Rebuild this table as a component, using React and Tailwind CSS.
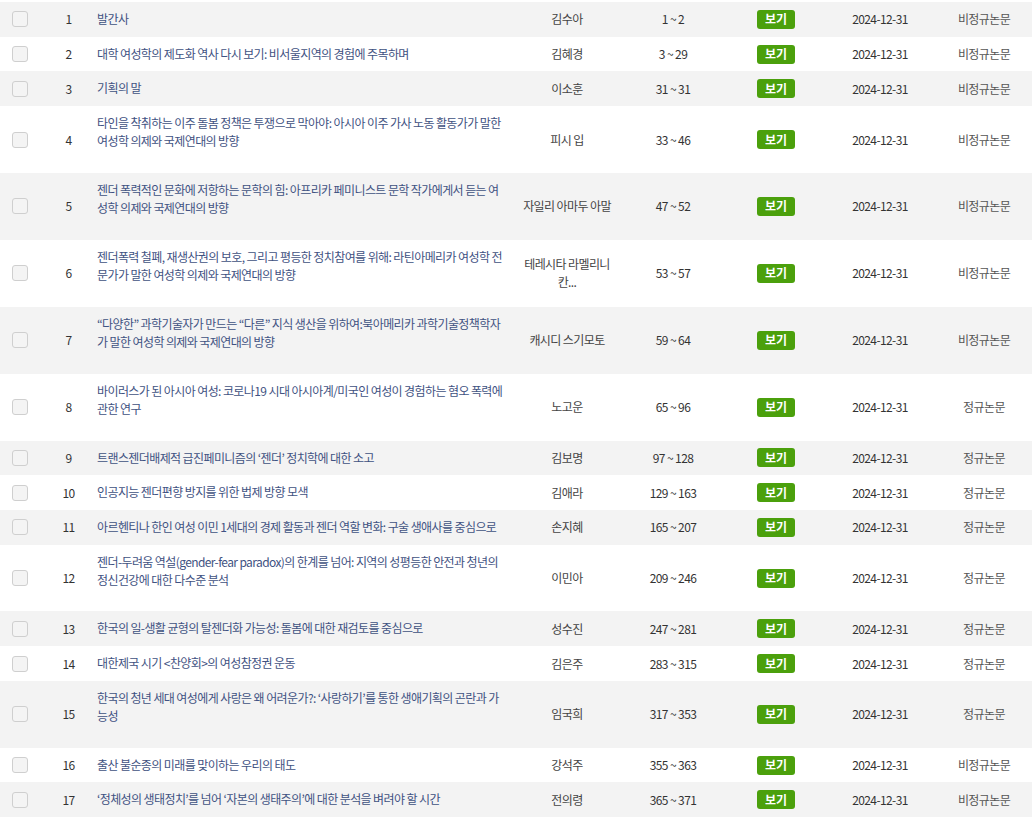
const rows = [
  { no: 1, title: ['발간사'], author: ['김수아'], pages: '1 ~ 2', type: '비정규논문' },
  { no: 2, title: ['대학 여성학의 제도화 역사 다시 보기: 비서울지역의 경험에 주목하며'], author: ['김혜경'], pages: '3 ~ 29', type: '비정규논문' },
  { no: 3, title: ['기획의 말'], author: ['이소훈'], pages: '31 ~ 31', type: '비정규논문' },
  { no: 4, title: ['타인을 착취하는 이주 돌봄 정책은 투쟁으로 막아야: 아시아 이주 가사 노동 활동가가 말한', '여성학 의제와 국제연대의 방향'], author: ['피시 입'], pages: '33 ~ 46', type: '비정규논문' },
  { no: 5, title: ['젠더 폭력적인 문화에 저항하는 문학의 힘: 아프리카 페미니스트 문학 작가에게서 듣는 여', '성학 의제와 국제연대의 방향'], author: ['자일리 아마두 아말'], pages: '47 ~ 52', type: '비정규논문' },
  { no: 6, title: ['젠더폭력 철폐, 재생산권의 보호, 그리고 평등한 정치참여를 위해: 라틴아메리카 여성학 전', '문가가 말한 여성학 의제와 국제연대의 방향'], author: ['테레시타 라멜리니', '칸...'], pages: '53 ~ 57', type: '비정규논문' },
  { no: 7, title: ['“다양한” 과학기술자가 만드는 “다른” 지식 생산을 위하여:북아메리카 과학기술정책학자', '가 말한 여성학 의제와 국제연대의 방향'], author: ['캐시디 스기모토'], pages: '59 ~ 64', type: '비정규논문' },
  { no: 8, title: ['바이러스가 된 아시아 여성: 코로나19 시대 아시아계/미국인 여성이 경험하는 혐오 폭력에', '관한 연구'], author: ['노고운'], pages: '65 ~ 96', type: '정규논문' },
  { no: 9, title: ['트랜스젠더배제적 급진페미니즘의 ‘젠더’ 정치학에 대한 소고'], author: ['김보명'], pages: '97 ~ 128', type: '정규논문' },
  { no: 10, title: ['인공지능 젠더편향 방지를 위한 법제 방향 모색'], author: ['김애라'], pages: '129 ~ 163', type: '정규논문' },
  { no: 11, title: ['아르헨티나 한인 여성 이민 1세대의 경제 활동과 젠더 역할 변화: 구술 생애사를 중심으로'], author: ['손지혜'], pages: '165 ~ 207', type: '정규논문' },
  { no: 12, title: ['젠더-두려움 역설(gender-fear paradox)의 한계를 넘어: 지역의 성평등한 안전과 청년의', '정신건강에 대한 다수준 분석'], author: ['이민아'], pages: '209 ~ 246', type: '정규논문' },
  { no: 13, title: ['한국의 일-생활 균형의 탈젠더화 가능성: 돌봄에 대한 재검토를 중심으로'], author: ['성수진'], pages: '247 ~ 281', type: '정규논문' },
  { no: 14, title: ['대한제국 시기 <찬양회>의 여성참정권 운동'], author: ['김은주'], pages: '283 ~ 315', type: '정규논문' },
  { no: 15, title: ['한국의 청년 세대 여성에게 사랑은 왜 어려운가?: ‘사랑하기’를 통한 생애기획의 곤란과 가', '능성'], author: ['임국희'], pages: '317 ~ 353', type: '정규논문' },
  { no: 16, title: ['출산 불순종의 미래를 맞이하는 우리의 태도'], author: ['강석주'], pages: '355 ~ 363', type: '비정규논문' },
  { no: 17, title: ['‘정체성의 생태정치’를 넘어 ‘자본의 생태주의’에 대한 분석을 벼려야 할 시간'], author: ['전의령'], pages: '365 ~ 371', type: '비정규논문' },
]

function Row({ row }) {
  const tall = row.title.length > 1
  return (
    <div className={`flex ${tall ? 'h-[66.9px]' : 'h-[34.7px]'} ${row.no % 2 ? 'bg-[#f3f3f3]' : 'bg-white'}`}>
      <div className="flex w-[40px] shrink-0 items-center pl-3">
        <span className="block h-4 w-4 rounded-[3px] border border-[#cfcfcf] bg-[#f4f4f4]" />
      </div>
      <div className="flex w-[57px] shrink-0 items-center justify-center text-[#333]">{row.no}</div>
      <div className="w-[413px] shrink-0 overflow-hidden pt-[8px] pr-2 text-[#3f5282]">
        {row.title.map((t) => (
          <div key={t} className="whitespace-nowrap">{t}</div>
        ))}
      </div>
      <div className="flex w-[114px] shrink-0 flex-col items-center justify-center text-center text-[#444]">
        {row.author.map((a) => (
          <div key={a}>{a}</div>
        ))}
      </div>
      <div className="flex w-[94px] shrink-0 items-center justify-center pl-[4px] text-[#333]">{row.pages}</div>
      <div className="flex w-[116px] shrink-0 items-center justify-center">
        <span className="flex h-[19px] w-[38px] items-center justify-center rounded-[3px] bg-[#4ba00c] text-[12px] font-bold tracking-normal text-white">보기</span>
      </div>
      <div className="flex w-[92px] shrink-0 items-center justify-center text-[#333]">2024-12-31</div>
      <div className="flex w-[106px] shrink-0 items-center justify-center pl-[10px] text-[#555]">{row.type}</div>
    </div>
  )
}

export default function App() {
  return (
    <div className="h-[819px] w-[1032px] overflow-hidden bg-white pt-[2px] text-[12px] leading-[18px] tracking-[-0.05em]" style={{ fontFamily: '"Noto Sans CJK KR", "Noto Sans", sans-serif' }}>
      {rows.map((row) => (
        <Row key={row.no} row={row} />
      ))}
    </div>
  )
}
